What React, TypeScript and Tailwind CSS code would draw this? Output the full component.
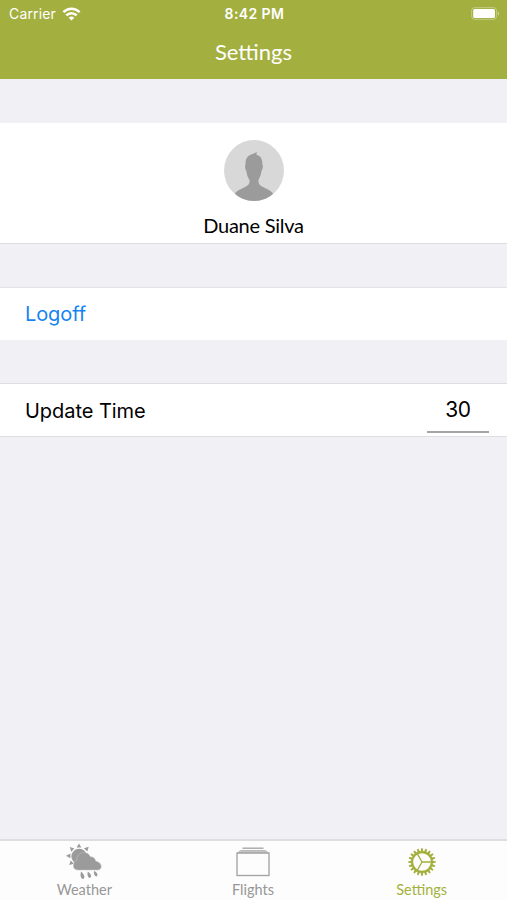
import React from 'react';

const TEETH = Array.from({ length: 20 }, (_, i) => i * 18);

function WifiIcon() {
  return (
    <svg className="w-[19px] h-[14px]" viewBox="0 0 18 14" fill="none" stroke="white" strokeWidth="2.5">
      <path d="M0.9 5.2C5.5 0.5 12.5 0.5 17.1 5.2" />
      <path d="M3.8 8.4C6.8 5.4 11.2 5.4 14.2 8.4" />
      <path d="M6.2 10.8C7.8 9.2 10.2 9.2 11.8 10.8L9 13.6Z" fill="white" stroke="none" />
    </svg>
  );
}

function BatteryIcon() {
  return (
    <svg className="w-[29px] h-[13px]" viewBox="0 0 29 13" fill="none">
      <rect x="0.6" y="0.6" width="25" height="11.8" rx="3.2" stroke="white" strokeOpacity="0.35" />
      <rect x="2.2" y="2" width="21.8" height="9" rx="1.6" fill="white" />
      <path d="M26.8 4.3C28.6 5 28.6 8 26.8 8.7Z" fill="white" fillOpacity="0.45" />
    </svg>
  );
}

function Avatar() {
  return (
    <svg className="w-[60px] h-[61px]" viewBox="0 0 60 61">
      <defs>
        <clipPath id="avatar-clip">
          <ellipse cx="30" cy="30.5" rx="30" ry="30.5" />
        </clipPath>
      </defs>
      <g clipPath="url(#avatar-clip)">
        <rect width="60" height="61" fill="#d8d8d8" />
        <path
          d="M32.8 12L32.5 15C36.5 15.5 38.6 19 38.3 24C39.4 25 38.8 29 37.5 31C37 35 35.500 38 34.500 40C34 44 36 45.500 40 47.500C44 49.500 48 51 50 55V61H10V55C12 51 16 49.500 20 47.500C24 45.500 26 44 25.500 40C24 38 22.800 35 22.300 31C21 29 20.700 25.500 21.700 24C21 18.500 24 15.500 28.500 14C30 13.500 31.500 12.800 32.800 12Z"
          fill="#9b9b9b"
        />
      </g>
    </svg>
  );
}

function WeatherIcon() {
  return (
    <svg className="w-[36px] h-[38px]" viewBox="0 0 36 38" fill="#9b9b9b">
      <path d="M13 0.5L15.400 4.600H10.600ZM3.800 4L8.400 5.400L5.200 8.700ZM22.700 3.800L21.300 8.400L17.900 5.200ZM0 12.800L4.400 10.400V15.200ZM3.200 22L4.700 17.400L7.800 20.700Z" />
      <circle cx="13.2" cy="13.6" r="7.8" />
      <path
        d="M12 27C8.200 27 6.800 24 7.600 21C8.200 18.700 9.600 17.500 11 17.100C10.500 12.500 13.800 9.600 17.800 9.600C20.900 9.600 23.300 11.200 24.300 13.700C27.200 13.600 29.300 15.500 29.600 18C33.200 19 35.600 21.200 35.200 24C34.900 25.800 33.600 27 31.900 27Z"
        stroke="#c4c4c4"
        strokeWidth="0.5"
      />
      <path d="M15 28.500C14 32.500 14.600 35 16.600 36C19.500 35.500 19 32 15 28.500ZM21.800 28.500C21 32 21.700 34.200 23.700 35C26.200 34.200 25.500 31 21.800 28.500ZM28 28C27.500 31 28.600 33 30.500 33.600C32.600 32.200 31.400 29.500 28 28Z" />
    </svg>
  );
}

function FlightsIcon() {
  return (
    <svg className="w-[34px] h-[30px]" viewBox="0 0 34 30" fill="none">
      <path d="M6.500 1.200H27.500" stroke="#a6a6a6" strokeWidth="1.4" />
      <path d="M4.500 3.500H29.500L32.500 6H1.500Z" fill="#c4c4c4" stroke="#b0b0b0" strokeWidth="0.8" />
      <rect x="1" y="6" width="32" height="22.5" stroke="#a6a6a6" strokeWidth="1.4" />
    </svg>
  );
}

function GearIcon() {
  return (
    <svg className="w-[28px] h-[28px]" viewBox="0 0 28 28" fill="none" stroke="#a3b03c">
      <circle cx="14" cy="14" r="9.9" strokeWidth="2.1" />
      {TEETH.map((angle) => (
        <path key={angle} d="M13.200 0.300H14.800L15.300 3.800H12.700Z" fill="#a3b03c" stroke="none" transform={`rotate(${angle} 14 14)`} />
      ))}
      <path d="M14 14H23.500M14 14L9.200 5.700M14 14L9.200 22.300" strokeWidth="1.3" />
    </svg>
  );
}

interface TabProps {
  label: string;
  icon: React.ReactNode;
  active?: boolean;
}

function Tab({ label, icon, active }: TabProps) {
  return (
    <button className={`flex flex-1 flex-col items-center ${active ? 'text-[#a3b03c]' : 'text-[#979797]'}`}>
      <span className="flex h-[40px] items-center justify-center pt-[2px]">{icon}</span>
      <span className="text-[14.5px] leading-[18px]">{label}</span>
    </button>
  );
}

export default function App() {
  return (
    <div className="flex h-[900px] w-[507px] flex-col bg-[#f0f0f5] font-['Lato',sans-serif] text-black">
      <header className="h-[79px] bg-[#a3b03f] text-white">
        <div className="grid h-[27px] grid-cols-3 items-center pl-[9px] pr-[7px] font-['Inter',sans-serif]">
          <div className="flex items-center gap-[6px]">
            <span className="text-[14px] tracking-[0.15px]">Carrier</span>
            <WifiIcon />
          </div>
          <span className="text-center text-[14px] font-semibold tracking-[0.4px]">8:42 PM</span>
          <div className="flex justify-end">
            <BatteryIcon />
          </div>
        </div>
        <h1 className="text-center text-[22px] leading-[50px]">Settings</h1>
      </header>

      <main className="flex-1">
        <section className="mt-[44px] flex h-[121px] flex-col items-center border-b border-[#dedee2] bg-white pt-[17px]">
          <Avatar />
          <p className="mt-[10px] text-[20px] leading-[28px] tracking-[-0.25px]">Duane Silva</p>
        </section>

        <section className="mt-[43px] flex h-[53px] items-center border-t border-[#e3e3e7] bg-white pl-[25px]">
          <button className="font-['Inter',sans-serif] text-[20px] tracking-[-0.1px] text-[#1583f0]">Logoff</button>
        </section>

        <section className="mt-[43px] flex h-[54px] justify-between border-y border-[#dedee2] bg-white pl-[25px] pr-[18px] font-['Inter',sans-serif]">
          <span className="text-[20px] leading-[54px] tracking-[-0.05px]">Update Time</span>
          <span className="h-[49px] w-[62px] border-b-2 border-[#a5a5a7] text-center text-[21px] leading-[51px] tracking-[-0.4px]">30</span>
        </section>
      </main>

      <nav className="flex h-[61px] border-t-2 border-[#dedee0] bg-[#fdfdfd] pr-[1px]">
        <Tab label="Weather" icon={<WeatherIcon />} />
        <Tab label="Flights" icon={<FlightsIcon />} />
        <Tab label="Settings" icon={<GearIcon />} active />
      </nav>
    </div>
  );
}
